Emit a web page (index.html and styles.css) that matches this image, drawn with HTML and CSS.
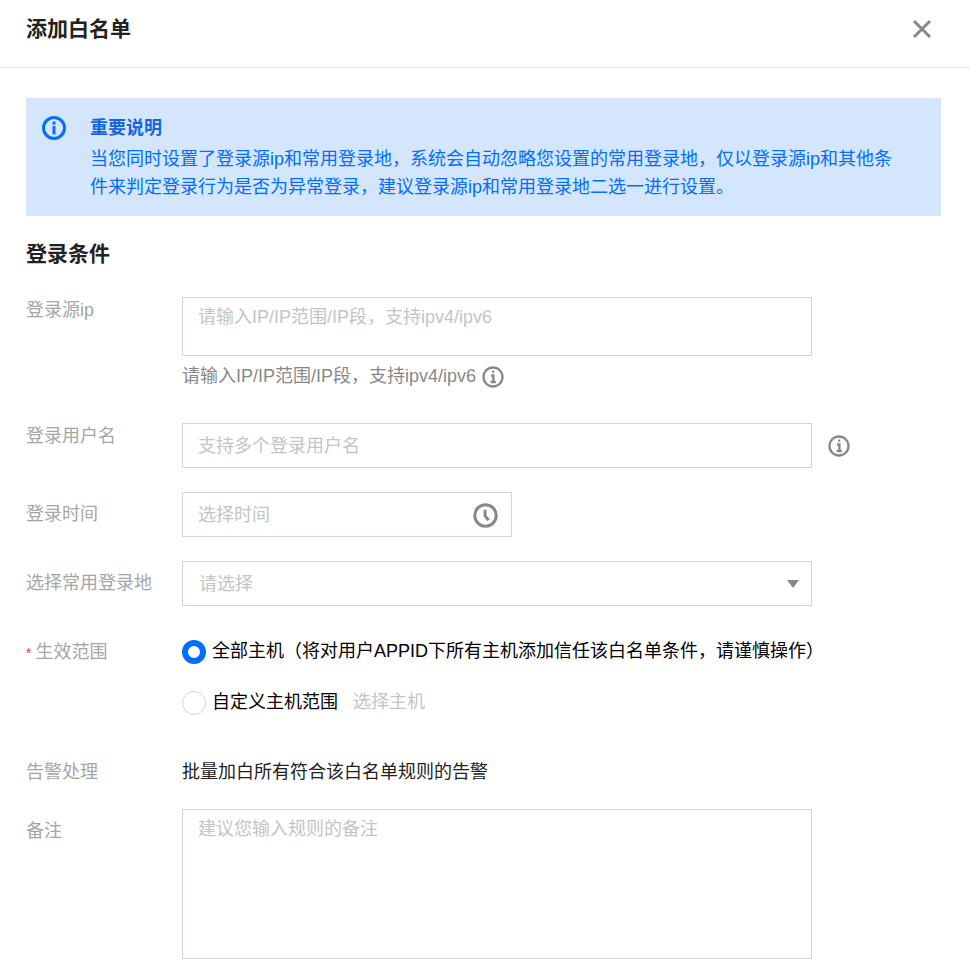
FILE: index.html
```html
<!DOCTYPE html>
<html lang="zh-CN">
<head>
<meta charset="utf-8">
<title>添加白名单</title>
<link rel="stylesheet" href="styles.css">
</head>
<body>
<header class="head">
  <h1 class="title">添加白名单</h1>
  <svg class="close" viewBox="0 0 20 20" aria-hidden="true"><path d="M2 2 18 18M18 2 2 18"/></svg>
</header>
<main class="content">
  <section class="alert">
    <svg class="alert-icon" viewBox="0 0 24 24" aria-hidden="true"><circle cx="12" cy="12" r="10.5"/><rect class="fill" x="10.5" y="5.6" width="3" height="3"/><rect class="fill" x="10.5" y="10" width="3" height="8.4"/></svg>
    <div class="alert-body">
      <strong class="alert-title">重要说明</strong>
      <p class="alert-text">当您同时设置了登录源ip和常用登录地，系统会自动忽略您设置的常用登录地，仅以登录源ip和其他条件来判定登录行为是否为异常登录，建议登录源ip和常用登录地二选一进行设置。</p>
    </div>
  </section>
  <h2 class="section">登录条件</h2>
  <form class="form">
    <div class="row">
      <div class="label">登录源ip</div>
      <div class="control">
        <div class="box area-sm"><span class="ph">请输入IP/IP范围/IP段，支持ipv4/ipv6</span></div>
        <div class="help">请输入IP/IP范围/IP段，支持ipv4/ipv6
          <svg class="info" viewBox="0 0 22 22" aria-hidden="true"><circle cx="11" cy="11" r="9.5"/><path d="M9 9.5h2.4V16M8.6 16h5.2M10 5.6h2.2"/></svg>
        </div>
      </div>
    </div>
    <div class="row">
      <div class="label">登录用户名</div>
      <div class="box input wide"><span class="ph">支持多个登录用户名</span></div>
      <svg class="info side" viewBox="0 0 22 22" aria-hidden="true"><circle cx="11" cy="11" r="9.5"/><path d="M9 9.5h2.4V16M8.6 16h5.2M10 5.6h2.2"/></svg>
    </div>
    <div class="row">
      <div class="label label-mid">登录时间</div>
      <div class="box input narrow">
        <span class="ph">选择时间</span>
        <svg class="clock" viewBox="0 0 24 24" aria-hidden="true"><circle cx="12" cy="12" r="10.3"/><path d="M11.6 6.5v6l3.4 4"/></svg>
      </div>
    </div>
    <div class="row">
      <div class="label label-mid">选择常用登录地</div>
      <div class="box input wide select">
        <span class="ph">请选择</span>
        <span class="caret"></span>
      </div>
    </div>
    <div class="row row-radio">
      <div class="label"><span class="req">*</span>生效范围</div>
      <div class="radios">
        <div class="radio-line"><span class="radio on"></span><span>全部主机（将对用户APPID下所有主机添加信任该白名单条件，请谨慎操作）</span></div>
        <div class="radio-line"><span class="radio"></span><span>自定义主机范围</span><span class="ph pick">选择主机</span></div>
      </div>
    </div>
    <div class="row row-alarm">
      <div class="label">告警处理</div>
      <div class="value">批量加白所有符合该白名单规则的告警</div>
    </div>
    <div class="row">
      <div class="label label-mid">备注</div>
      <div class="box area-lg"><span class="ph">建议您输入规则的备注</span></div>
    </div>
  </form>
</main>
</body>
</html>
```
FILE: styles.css
```css
* { box-sizing: border-box; }
html, body { margin: 0; padding: 0; height: 100%; overflow: hidden; }
body {
  background: #fff;
  color: #000;
  font-family: "Liberation Sans", "Noto Sans CJK SC", sans-serif;
  font-size: 18px;
  line-height: 27px;
}
.head {
  height: 68px;
  border-bottom: 1px solid #e7e8eb;
  display: flex;
  align-items: flex-start;
  justify-content: space-between;
  padding: 14px 38px 0 26px;
}
.title { margin: 0; font-size: 21px; line-height: 30px; font-weight: 700; color: #222; }
.close { width: 20px; height: 20px; margin-top: 5px; fill: none; stroke: #888; stroke-width: 3; }
.content { padding: 30px 29px 0 26px; }
.alert {
  background: #d4e5fe;
  height: 118px;
  display: flex;
  padding: 17px 40px 0 16px;
  color: #006eff;
}
.alert-icon { width: 24px; height: 24px; flex: none; margin-top: 1px; fill: none; stroke: #006eff; stroke-width: 3; }
.alert-icon .fill { fill: #006eff; stroke: none; }
.alert-body { margin-left: 24px; }
.alert-title { display: block; font-size: 18px; line-height: 27px; color: #1664e0; }
.alert-text { margin: 3px 0 0; line-height: 28px; }
.section { margin: 23px 0 0; font-size: 21px; line-height: 30px; font-weight: 700; color: #222; }
.form { margin-top: 28px; display: flex; flex-direction: column; gap: 24px; }
.row { display: flex; align-items: flex-start; }
.label { width: 156px; flex: none; color: #a6a6a6; line-height: 27px; }
.label-mid { padding-top: 9px; }
.control { width: 630px; }
.box { border: 1px solid #cfd5de; background: #fff; padding: 6px 15px; }
.ph { color: #c4c4c4; }
.area-sm { height: 59px; }
.area-lg { width: 630px; height: 150px; }
.input { height: 45px; padding-top: 9px; position: relative; }
.wide { width: 630px; }
.narrow { width: 330px; }
.select { padding-left: 16px; }
.help { color: #888; margin: 7px 0 9px; display: flex; align-items: center; gap: 6px; }
.info { width: 22px; height: 22px; flex: none; fill: none; stroke: #888; stroke-width: 2.3; }
.side { margin: 12px 0 0 16px; }
.clock { position: absolute; right: 13px; top: 10px; width: 25px; height: 25px; fill: none; stroke: #888; stroke-width: 2.9; }
.caret {
  position: absolute; right: 12px; top: 18px;
  border-left: 6px solid transparent;
  border-right: 6px solid transparent;
  border-top: 8px solid #888;
}
.row-radio .label { padding-top: 9px; }
.req { color: #f33; font-size: 14px; margin-right: 4px; }
.radios { display: flex; flex-direction: column; gap: 24px; padding-top: 8px; }
.radio-line { display: flex; align-items: center; height: 27px; white-space: nowrap; }
.radio { width: 24px; height: 24px; border-radius: 50%; border: 1px solid #cfd5de; margin-right: 6px; flex: none; }
.radio.on { border: 6px solid #006eff; }
.pick { margin-left: 15px; }
.row-alarm { margin-top: 19px; height: 26px; }
.value { color: #222; }
```
